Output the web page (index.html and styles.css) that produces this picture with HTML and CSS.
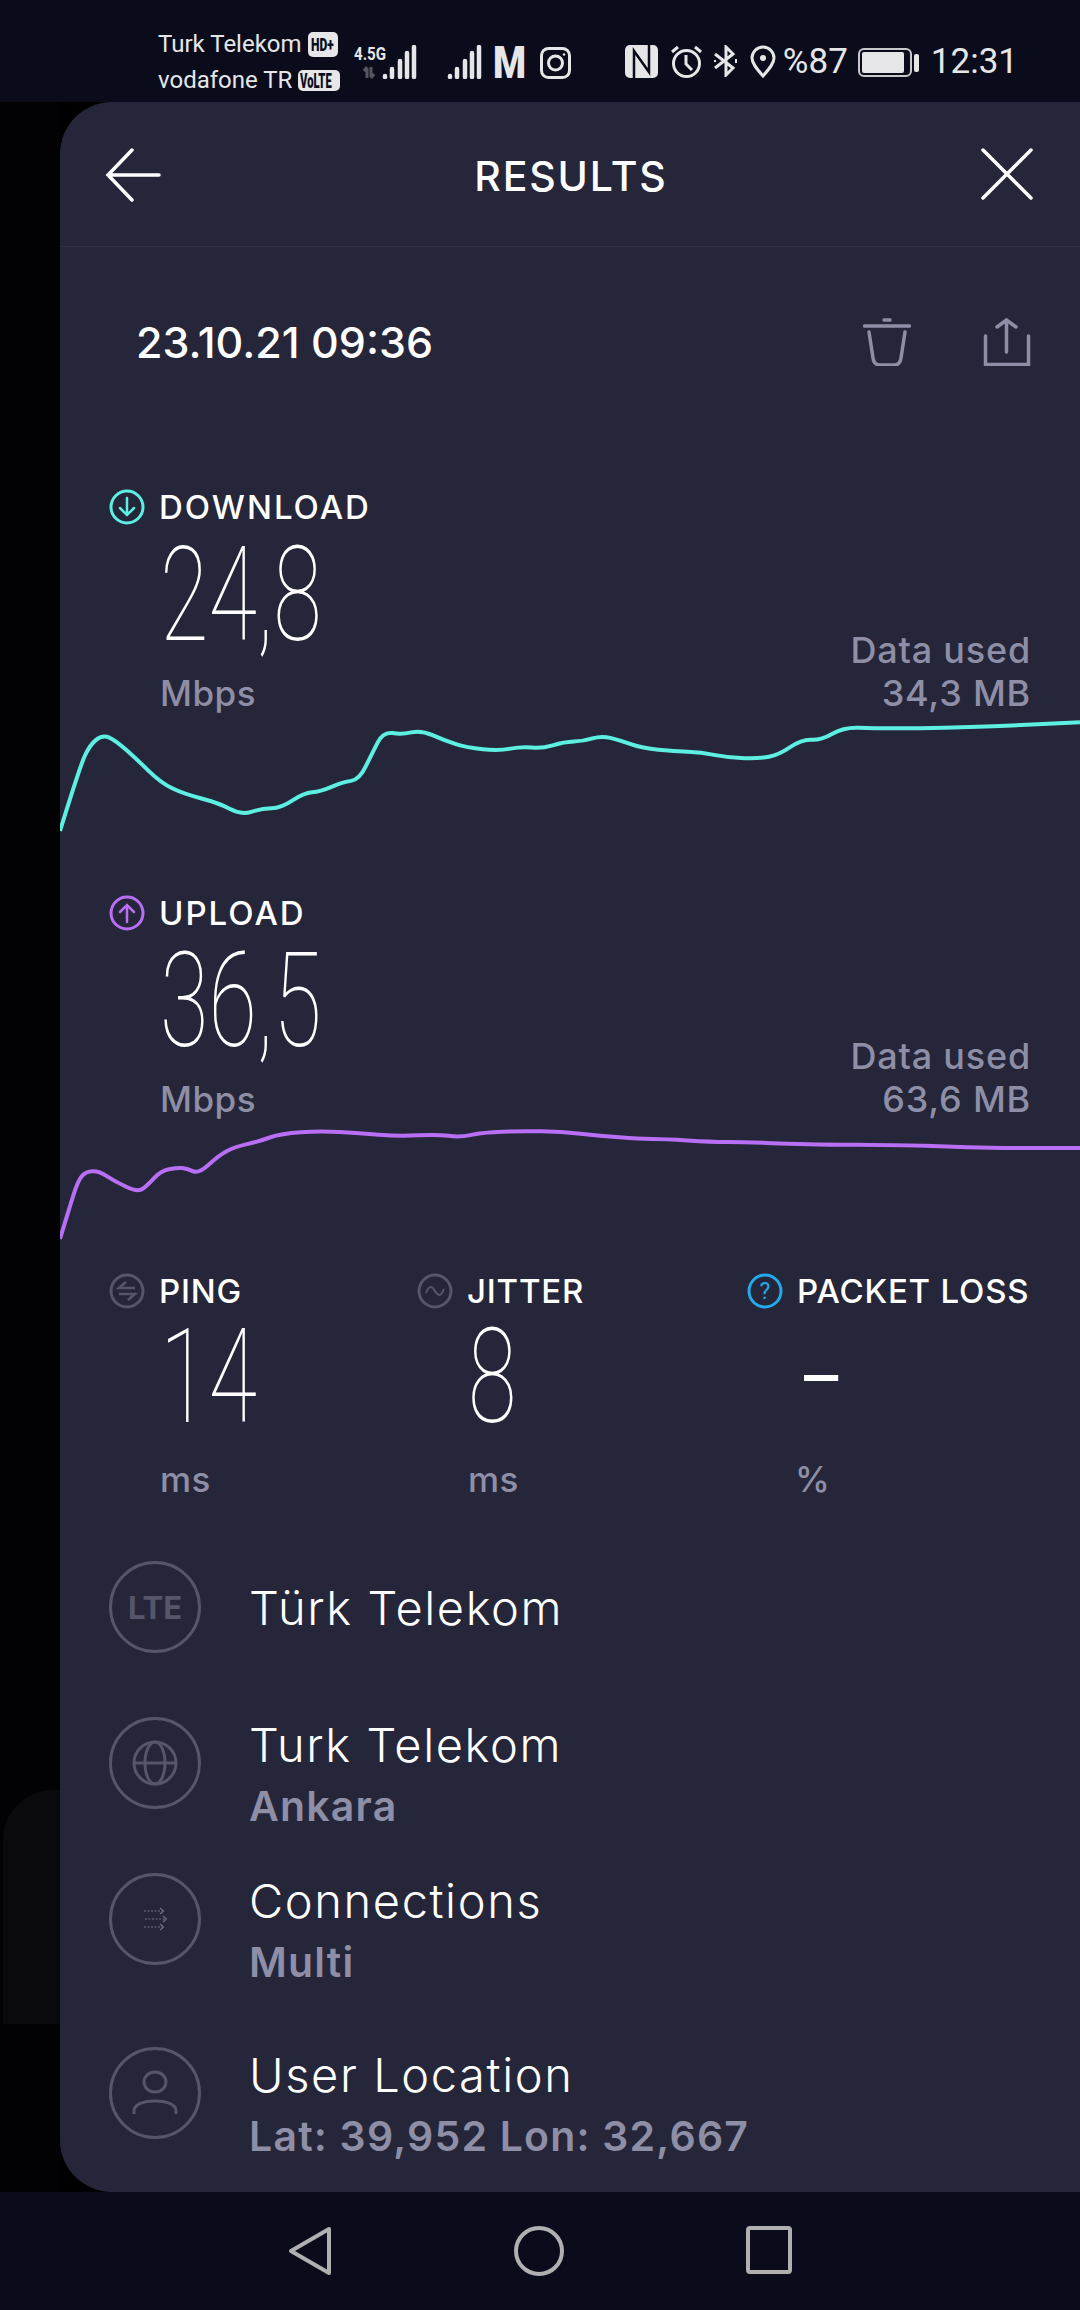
FILE: index.html
```html
<!DOCTYPE html>
<html lang="en">
<head>
    <meta charset="UTF-8">
    <meta name="viewport" content="width=device-width, initial-scale=1.0">
    <title>Results</title>
    <link rel="stylesheet" href="styles.css">
</head>
<body>
    <div class="status-bar">
        <div class="carriers">
            <div class="carrier">
                <span>Turk Telekom</span>
                <svg class="badge-hd" width="30" height="25" viewBox="0 0 30 25">
                    <rect width="30" height="25" rx="5" fill="#e6e6e8"/>
                    <text transform="translate(3 19) scale(0.67 1)" font-size="18" font-weight="900" fill="#0a0c1b">HD+</text>
                </svg>
            </div>
            <div class="carrier">
                <span>vodafone TR</span>
                <svg class="badge-volte" width="42" height="25" viewBox="0 0 42 25">
                    <rect y="2" width="42" height="21" rx="5" fill="#e6e6e8"/>
                    <text transform="translate(2 20) scale(0.56 1)" font-size="20" font-weight="900" fill="#0a0c1b">VoLTE</text>
                </svg>
            </div>
        </div>
        <svg class="signal-main" width="64" height="34" viewBox="0 0 64 34">
            <text transform="translate(0 15) scale(0.84 1)" font-size="18" font-weight="700" fill="#e6e6e8">4.5G</text>
            <path d="M13 33V23M13 22l-3 4M17 22V32M17 33l3-4" stroke="#55565f" stroke-width="3" fill="none"/>
            <path d="M31 31v1M38 24v8M46 16v16M53 8v24M60 2v30" stroke="#e6e6e8" stroke-width="4.5" stroke-linecap="round" fill="none"/>
        </svg>
        <svg class="signal-second" width="36" height="34" viewBox="0 0 36 34">
            <path d="M3 31v1M10 24v8M18 16v16M25 8v24M32 2v30" stroke="#e6e6e8" stroke-width="4.5" stroke-linecap="round" fill="none"/>
        </svg>
        <svg class="app-m" width="38" height="54" viewBox="0 0 38 54">
            <text transform="translate(0 43) scale(0.84 1)" font-size="45" font-weight="900" fill="#e6e6e8">M</text>
        </svg>
        <svg class="app-insta" width="31" height="32" viewBox="0 0 31 32" fill="none" stroke="#e6e6e8" stroke-width="3">
            <rect x="1.5" y="1.5" width="28" height="29" rx="7"/>
            <circle cx="15.5" cy="16" r="7"/>
            <circle cx="24" cy="7.5" r="1.2" fill="#e6e6e8" stroke="none"/>
        </svg>
        <div class="status-right">
            <svg class="nfc" width="33" height="33" viewBox="0 0 33 33">
                <rect width="33" height="33" rx="5" fill="#e6e6e8"/>
                <path d="M9 33V6L24 27V0" stroke="#0a0c1b" stroke-width="2.5" fill="none"/>
            </svg>
            <svg class="alarm" width="33" height="33" viewBox="0 0 33 33" fill="none" stroke="#e6e6e8" stroke-width="3">
                <circle cx="16.5" cy="18.5" r="13"/>
                <path d="M16 10V19L22 25M2 7L8 2M31 7L25 2"/>
            </svg>
            <svg class="bluetooth" width="27" height="32" viewBox="0 0 27 32" fill="none" stroke="#e6e6e8" stroke-width="3">
                <path d="M2 9L20 23L13 30V2L20 9L2 23"/>
                <path d="M23 14v4M2 15v2" stroke-width="2"/>
            </svg>
            <svg class="pin" width="26" height="33" viewBox="0 0 26 33" fill="none" stroke="#e6e6e8" stroke-width="3">
                <path d="M13 31C6 23 2 18 2 13A11 11 0 0 1 24 13C24 18 20 23 13 31Z"/>
                <circle cx="13" cy="13" r="3" fill="#e6e6e8" stroke="none"/>
            </svg>
            <span class="status-text battery-pct">%87</span>
            <svg class="battery" width="61" height="29" viewBox="0 0 61 29">
                <rect x="1" y="1" width="52" height="27" rx="5" fill="none" stroke="#c9c9cd" stroke-width="2"/>
                <rect x="4" y="4" width="42" height="21" rx="2" fill="#e6e6e8"/>
                <rect x="56" y="6" width="5" height="18" rx="2" fill="#e6e6e8"/>
            </svg>
            <span class="status-text clock">12:31</span>
        </div>
    </div>

    <div class="middle">
        <div class="gutter">
            <div class="back-card"></div>
        </div>

        <div class="panel">
            <div class="top-bar">
                <svg width="56" height="54" viewBox="0 0 56 54" fill="none" stroke="#fff" stroke-width="3.5" stroke-linecap="round">
                    <path d="M27 2L3 27L27 52M3 27H54"/>
                </svg>
                <h1>RESULTS</h1>
                <svg width="52" height="52" viewBox="0 0 52 52" fill="none" stroke="#fff" stroke-width="3.5" stroke-linecap="round">
                    <path d="M2 2L50 50M50 2L2 50"/>
                </svg>
            </div>

            <div class="date-row">
                <span class="date">23.10.21 09:36</span>
                <div class="date-actions">
                    <svg width="48" height="48" viewBox="0 0 48 48" fill="none" stroke="#8e8fa6" stroke-width="3.5" stroke-linecap="round">
                        <path d="M1.5 8H46.5M21 2H27M6 14L10 40Q11 47 17 47H31Q37 47 38 40L42 14"/>
                    </svg>
                    <svg width="48" height="48" viewBox="0 0 48 48" fill="none" stroke="#8e8fa6" stroke-width="3.5" stroke-linecap="round">
                        <path d="M2.5 18V46.5H45.5V18M23.5 34V3M14 9L23.5 2L33 9"/>
                    </svg>
                </div>
            </div>

            <section class="metric metric-download">
                <div class="metric-head">
                    <svg class="head-icon" width="36" height="36" viewBox="0 0 36 36" fill="none" stroke="#5df0e2" stroke-width="3" stroke-linecap="round">
                        <circle cx="18" cy="18" r="16"/>
                        <path d="M18 9V26M11 19L18 26L25 19" stroke-width="2.5"/>
                    </svg>
                    <span class="head-label">DOWNLOAD</span>
                </div>
                <div class="metric-body">
                    <div>
                        <div class="big-value">24,8</div>
                        <div class="unit">Mbps</div>
                    </div>
                    <div class="data-used">Data used<br>34,3 MB</div>
                </div>
                <svg class="graph graph-download" id="downloadGraph" viewBox="0 1188 1568 313" preserveAspectRatio="none"></svg>
            </section>

            <section class="metric metric-upload">
                <div class="metric-head">
                    <svg class="head-icon" width="36" height="36" viewBox="0 0 36 36" fill="none" stroke="#b96ff5" stroke-width="3" stroke-linecap="round">
                        <circle cx="18" cy="18" r="16"/>
                        <path d="M18 27V10M11 17L18 10L25 17" stroke-width="2.5"/>
                    </svg>
                    <span class="head-label">UPLOAD</span>
                </div>
                <div class="metric-body">
                    <div>
                        <div class="big-value">36,5</div>
                        <div class="unit">Mbps</div>
                    </div>
                    <div class="data-used">Data used<br>63,6 MB</div>
                </div>
                <svg class="graph graph-upload" id="uploadGraph" viewBox="0 792 1568 360" preserveAspectRatio="none"></svg>
            </section>

            <div class="stats">
                <div class="stat stat-ping">
                    <div class="metric-head">
                        <svg class="head-icon" width="36" height="36" viewBox="0 0 36 36" fill="none" stroke="#55566b" stroke-width="3">
                            <circle cx="18" cy="18" r="16"/>
                            <path d="M26 15H10L17 9M10 21H26L19 27" stroke-width="2.5"/>
                        </svg>
                        <span class="head-label">PING</span>
                    </div>
                    <div class="big-value">14</div>
                    <div class="unit">ms</div>
                </div>
                <div class="stat stat-jitter">
                    <div class="metric-head">
                        <svg class="head-icon" width="36" height="36" viewBox="0 0 36 36" fill="none" stroke="#55566b" stroke-width="3">
                            <circle cx="18" cy="18" r="16"/>
                            <path d="M9 20C12 12 15 13 18 18C21 23 24 24 27 16" stroke-width="2"/>
                        </svg>
                        <span class="head-label">JITTER</span>
                    </div>
                    <div class="big-value">8</div>
                    <div class="unit">ms</div>
                </div>
                <div class="stat stat-loss">
                    <div class="metric-head">
                        <svg class="head-icon" width="36" height="36" viewBox="0 0 36 36" fill="none" stroke="#25a9ea" stroke-width="3">
                            <circle cx="18" cy="18" r="16"/>
                            <text x="18" y="26" text-anchor="middle" font-size="23" fill="#25a9ea" stroke="none">?</text>
                        </svg>
                        <span class="head-label">PACKET LOSS</span>
                    </div>
                    <div class="big-value dash-value">
                        <div class="dash"></div>
                    </div>
                    <div class="unit">%</div>
                </div>
            </div>

            <div class="info-row info-first">
                <div class="info-icon">
                    <span class="lte">LTE</span>
                </div>
                <div class="info-text">
                    <div class="info-title">Türk Telekom</div>
                </div>
            </div>
            <div class="info-row">
                <div class="info-icon">
                    <svg width="46" height="46" viewBox="0 0 46 46" fill="none" stroke="#55566b" stroke-width="3">
                        <circle cx="23" cy="23" r="21"/>
                        <ellipse cx="23" cy="23" rx="10" ry="21"/>
                        <path d="M2 23H44"/>
                    </svg>
                </div>
                <div class="info-text">
                    <div class="info-title">Turk Telekom</div>
                    <div class="info-sub">Ankara</div>
                </div>
            </div>
            <div class="info-row">
                <div class="info-icon">
                    <svg width="24" height="24" viewBox="0 0 24 24" fill="none" stroke="#6e6f84" stroke-width="1.2">
                        <path d="M1 4H20M2 12H23M1 20H20" stroke-dasharray="2 1.5"/>
                        <path d="M17 1L20.5 4L17 7M20 9L23.5 12L20 15M17 17L20.5 20L17 23"/>
                    </svg>
                </div>
                <div class="info-text">
                    <div class="info-title">Connections</div>
                    <div class="info-sub">Multi</div>
                </div>
            </div>
            <div class="info-row info-last">
                <div class="info-icon">
                    <svg width="46" height="46" viewBox="0 0 46 46" fill="none" stroke="#55566b" stroke-width="3">
                        <ellipse cx="23" cy="12" rx="11" ry="10"/>
                        <path d="M2 44V41C2 34 12 31 23 31C34 31 44 34 44 41V44"/>
                    </svg>
                </div>
                <div class="info-text">
                    <div class="info-title">User Location</div>
                    <div class="info-sub">Lat: 39,952 Lon: 32,667</div>
                </div>
            </div>
        </div>
    </div>

    <div class="nav-bar">
        <svg width="44" height="50" viewBox="0 0 44 50" fill="none" stroke="#b0b0b0" stroke-width="4" stroke-linejoin="round">
            <path d="M41 3V47L3 25Z"/>
        </svg>
        <svg width="50" height="50" viewBox="0 0 50 50" fill="none" stroke="#b0b0b0" stroke-width="4">
            <circle cx="25" cy="25" r="23"/>
        </svg>
        <svg width="46" height="48" viewBox="0 0 46 48" fill="none" stroke="#b0b0b0" stroke-width="4" stroke-linejoin="round">
            <rect x="2" y="2" width="42" height="44" rx="2"/>
        </svg>
    </div>

    <script src="chart.js"></script>
</body>
</html>
```

FILE: styles.css
```css
* {
    box-sizing: border-box;
}

body {
    width: 1080px;
    height: 2310px;
    margin: 0;
    display: flex;
    flex-direction: column;
    overflow: hidden;
    font-family: Inter, "Liberation Sans", sans-serif;
    background-color: #000;
    color: #fff;
}

svg {
    display: block;
    flex-shrink: 0;
}

svg text {
    font-family: Roboto, "Liberation Sans", sans-serif;
}

/* status bar */
.status-bar {
    height: 102px;
    padding: 26px 62px 0 158px;
    display: flex;
    align-items: flex-start;
    background-color: #0a0c1b;
    color: #e6e6e8;
    font-family: Roboto, "Liberation Sans", sans-serif;
}

.carriers {
    width: 196px;
    font-size: 24px;
    line-height: 36px;
}

.carrier {
    display: flex;
    align-items: center;
    gap: 6px;
    height: 36px;
}

.signal-main {
    margin-top: 19px;
}

.signal-second {
    margin: 19px 0 0 29px;
}

.app-m {
    margin: 9px 0 0 10px;
}

.app-insta {
    margin: 21px 0 0 9px;
}

.status-right {
    margin-left: auto;
    margin-top: 19px;
    display: flex;
    align-items: flex-start;
}

.alarm {
    margin-left: 12px;
}

.bluetooth {
    margin-left: 10px;
}

.pin {
    margin-left: 10px;
}

.status-text {
    font-size: 35px;
    line-height: 34px;
}

.battery-pct {
    margin-left: 7px;
}

.battery {
    margin: 3px 0 0 10px;
}

.clock {
    margin-left: 12px;
}

/* main area */
.middle {
    flex: 1;
    display: flex;
    min-height: 0;
}

.gutter {
    width: 60px;
    padding: 1688px 0 0 3px;
    background-color: #020204;
}

.back-card {
    height: 234px;
    background-color: #0a0a0e;
    border-top-left-radius: 50px;
}

.panel {
    flex: 1;
    background-color: #252639;
    border-radius: 52px 0 0 52px;
    overflow: hidden;
}

.top-bar {
    height: 145px;
    padding: 46px 47px 0 45px;
    display: flex;
    justify-content: space-between;
    align-items: flex-start;
    border-bottom: 1px solid #2f3044;
}

h1 {
    margin: 5px 0 0;
    font-size: 41px;
    line-height: 46px;
    font-weight: 500;
    letter-spacing: 1.8px;
}

.date-row {
    margin-top: 71px;
    padding: 0 49px 0 76px;
    height: 48px;
    display: flex;
    justify-content: space-between;
    align-items: center;
}

.date {
    font-size: 43px;
    font-weight: 500;
}

.date-actions {
    display: flex;
    gap: 72px;
}

/* metrics */
.metric {
    margin-top: 123px;
}

.metric-upload {
    margin-top: 60px;
}

.metric-head {
    display: flex;
    align-items: center;
    gap: 14px;
    height: 36px;
    white-space: nowrap;
}

.metric-head .head-label {
    font-size: 33px;
    font-weight: 500;
    letter-spacing: 0.8px;
}

.metric .metric-head .head-label {
    letter-spacing: 2px;
}

.metric > .metric-head {
    padding-left: 49px;
}

.metric-body {
    margin-top: 13px;
    padding: 0 49px 0 100px;
    display: flex;
    justify-content: space-between;
    align-items: flex-end;
}

.big-value {
    height: 114px;
    font-family: Roboto, "Liberation Sans", sans-serif;
    font-size: 132px;
    line-height: 114px;
    font-weight: 150;
    transform: scaleX(0.67);
    transform-origin: left center;
    white-space: nowrap;
}

.unit {
    margin-top: 21px;
    font-size: 35px;
    line-height: 40px;
    font-weight: 500;
    letter-spacing: 0.5px;
    color: #8e8fa6;
}

.data-used {
    margin-bottom: -2px;
    font-size: 36px;
    line-height: 43px;
    font-weight: 500;
    letter-spacing: 0.8px;
    color: #8e8fa6;
    text-align: right;
}

.graph {
    display: block;
    width: 1020px;
    margin-top: 6px;
}

.graph path {
    fill: none;
    stroke-width: 4;
    vector-effect: non-scaling-stroke;
    stroke-linejoin: round;
}

.graph-download {
    height: 116px;
}

.graph-download path {
    stroke: #5df0e2;
}

.graph-upload {
    height: 120px;
    margin-top: 5px;
}

.graph-upload path {
    stroke: #b96ff5;
}

/* ping, jitter, packet loss */
.stats {
    margin-top: 29px;
    padding-left: 49px;
    display: flex;
}

.stat-ping {
    width: 308px;
}

.stat-jitter {
    width: 330px;
}

.stat .big-value {
    margin: 11px 0 0 51px;
}

.stat .unit {
    margin: 25px 0 0 51px;
}

.stat-loss .unit {
    margin-left: 48px;
}

.dash-value {
    padding-top: 55px;
}

.dash {
    width: 51px;
    height: 6px;
    margin-left: 9px;
    background-color: #fff;
}

/* info list */
.info-row {
    margin-top: 64px;
    padding-left: 49px;
    display: flex;
    align-items: flex-start;
    height: 92px;
}

.info-first {
    margin-top: 62px;
}

.info-last {
    margin-top: 82px;
}

.info-icon {
    width: 92px;
    height: 92px;
    border: 3px solid #55566b;
    border-radius: 50%;
    display: flex;
    align-items: center;
    justify-content: center;
}

.lte {
    font-size: 31px;
    font-weight: 700;
    color: #55566b;
}

.info-text {
    margin-left: 48px;
    white-space: nowrap;
}

.info-first .info-text {
    padding-top: 19px;
}

.info-title {
    font-size: 47px;
    line-height: 56px;
    font-weight: 300;
    letter-spacing: 1.6px;
}

.info-sub {
    padding-top: 9px;
    font-size: 41px;
    line-height: 48px;
    font-weight: 600;
    letter-spacing: 1.2px;
    color: #8e8fa6;
}

/* navigation bar */
.nav-bar {
    height: 118px;
    padding: 34px 288px 0;
    display: flex;
    justify-content: space-between;
    align-items: flex-start;
    background-color: #0a0c1b;
}
```

FILE: chart.js
```js
// points read off the speed test, x then y in the viewBox of each graph
const downloadPoints = [
    [0, 1490], [30, 1320], [45, 1260], [65, 1230], [85, 1245], [120, 1300], [155, 1360], [190, 1390],
    [245, 1415], [278, 1447], [310, 1430], [340, 1428], [375, 1387], [400, 1384], [435, 1358], [460, 1352],
    [480, 1280], [497, 1222], [525, 1230], [555, 1218], [590, 1245], [625, 1265], [675, 1274], [710, 1262],
    [740, 1268], [775, 1250], [805, 1248], [832, 1233], [860, 1245], [895, 1267], [945, 1275], [985, 1278],
    [1030, 1293], [1075, 1295], [1105, 1285], [1140, 1243], [1170, 1245], [1205, 1210], [1250, 1213],
    [1320, 1213], [1400, 1210], [1470, 1205], [1568, 1197]
];

const uploadPoints = [
    [0, 1137], [15, 1040], [28, 960], [40, 935], [60, 933], [85, 965], [120, 997], [135, 975], [155, 932],
    [180, 923], [195, 925], [213, 942], [245, 885], [270, 860], [305, 845], [340, 820], [400, 813], [460, 819],
    [520, 829], [580, 823], [615, 832], [650, 817], [710, 813], [770, 815], [830, 827], [890, 837], [930, 837],
    [1000, 846], [1050, 846], [1140, 853], [1310, 856], [1350, 859], [1440, 864], [1568, 864]
];

function drawGraph(id, points) {
    // curve through the midpoints so the line stays smooth
    let d = `M${points[0][0]} ${points[0][1]}`;
    for (let i = 1; i < points.length - 1; i++) {
        const midX = (points[i][0] + points[i + 1][0]) / 2;
        const midY = (points[i][1] + points[i + 1][1]) / 2;
        d += ` Q${points[i][0]} ${points[i][1]} ${midX} ${midY}`;
    }
    const last = points[points.length - 1];
    d += ` L${last[0]} ${last[1]}`;

    const path = document.createElementNS('http://www.w3.org/2000/svg', 'path');
    path.setAttribute('d', d);
    document.getElementById(id).appendChild(path);
}

drawGraph('downloadGraph', downloadPoints);
drawGraph('uploadGraph', uploadPoints);
```
